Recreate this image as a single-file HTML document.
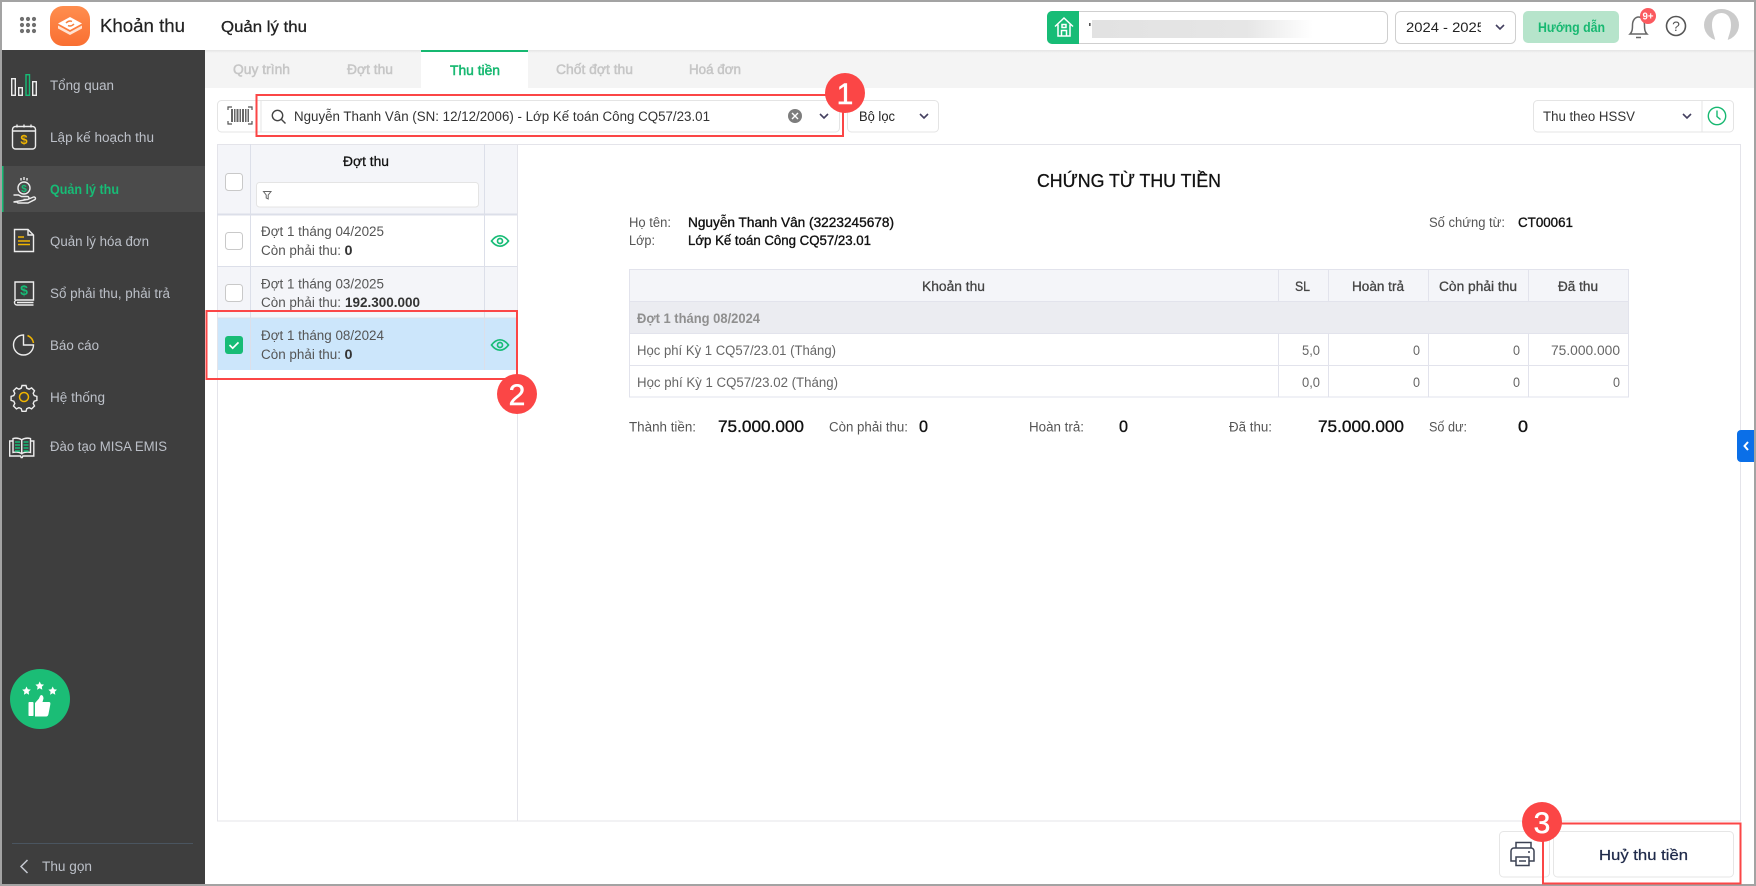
<!DOCTYPE html>
<html lang="vi">
<head>
<meta charset="utf-8">
<title>Quản lý thu</title>
<style>
html,body{margin:0;padding:0;background:#fff;width:1756px;height:886px;overflow:hidden}
svg{display:block}
text{font-family:"Liberation Sans","Noto Sans CJK SC",sans-serif;font-size:13.5px;fill:#444;white-space:pre}
.s{fill:#bcc0c8}
.m{stroke:currentColor;stroke-width:.25}
.t{fill:#c6c6c6;stroke:#c6c6c6;stroke-width:.5;font-size:13.5px}
.d{fill:#111}
.l{fill:#555}
.h{fill:#444;stroke:#444;stroke-width:.3}
.b{fill:#111;stroke:#111;stroke-width:.35}
.n{fill:#666}
.big{font-size:16.5px;fill:#111;stroke:#111;stroke-width:.35}
.badge{font-size:30px;fill:#fff;stroke:#fff;stroke-width:.5;text-anchor:middle}
</style>
</head>
<body>
<svg width="1756" height="886" viewBox="0 0 1756 886" xmlns="http://www.w3.org/2000/svg">
<defs>
<linearGradient id="lg" x1="0" y1="0" x2="0" y2="1"><stop offset="0" stop-color="#ff8e4e"/><stop offset="1" stop-color="#f96f32"/></linearGradient>
<linearGradient id="blur" x1="0" y1="0" x2="1" y2="0"><stop offset="0" stop-color="#e2e2e2"/><stop offset=".7" stop-color="#e6e6e6"/><stop offset="1" stop-color="#fff"/></linearGradient>
<linearGradient id="sh" x1="0" y1="0" x2="0" y2="1"><stop offset="0" stop-color="#e4e4e4"/><stop offset="1" stop-color="#f4f4f4"/></linearGradient>
</defs>

<!-- frame -->
<rect width="1756" height="886" fill="#a3a3a3"/>
<rect x="2" y="2" width="1752" height="882" fill="#fff"/>

<!-- tabs bar -->
<rect x="205" y="50" width="1549" height="38" fill="#f4f4f4"/>
<rect x="205" y="50" width="1549" height="3" fill="url(#sh)"/>
<rect x="421" y="50" width="107" height="38" fill="#fff"/>
<rect x="421" y="50" width="107" height="2" fill="#17b871"/>
<text class="t" x="233" y="74" textLength="57" lengthAdjust="spacingAndGlyphs">Quy trình</text>
<text class="t" x="347" y="74" textLength="46" lengthAdjust="spacingAndGlyphs">Đợt thu</text>
<text x="450" y="75" textLength="50" lengthAdjust="spacingAndGlyphs" style="fill:#17b871;stroke:#17b871;stroke-width:.5">Thu tiền</text>
<text class="t" x="556" y="74" textLength="77" lengthAdjust="spacingAndGlyphs">Chốt đợt thu</text>
<text class="t" x="689" y="74" textLength="52" lengthAdjust="spacingAndGlyphs">Hoá đơn</text>

<!-- header left -->
<g fill="#707070">
<circle cx="22" cy="19" r="2.1"/><circle cx="28" cy="19" r="2.1"/><circle cx="34" cy="19" r="2.1"/>
<circle cx="22" cy="25" r="2.1"/><circle cx="28" cy="25" r="2.1"/><circle cx="34" cy="25" r="2.1"/>
<circle cx="22" cy="31" r="2.1"/><circle cx="28" cy="31" r="2.1"/><circle cx="34" cy="31" r="2.1"/>
</g>
<rect x="50" y="6" width="40" height="40" rx="13" fill="url(#lg)"/>
<path d="M70 17 L82 23.5 L70 30 L58 23.5Z" fill="#fff"/>
<path d="M58 25.5 L70 32 L82 25.5 L82 28.5 L70 35 L58 28.5Z" fill="#ffe3d3"/>
<path d="M66 23 q3-3 6-1.5 M74 24 q-3 3-6 1.5" stroke="#f7803f" stroke-width="1.5" fill="none"/>
<text x="100" y="32" textLength="85" lengthAdjust="spacingAndGlyphs" style="font-size:18.5px;fill:#222;stroke:#222;stroke-width:.2">Khoản thu</text>
<text x="221" y="32" textLength="86" lengthAdjust="spacingAndGlyphs" style="font-size:16px;fill:#222;stroke:#222;stroke-width:.3">Quản lý thu</text>

<!-- header right -->
<rect x="1047.5" y="11.5" width="340" height="32" rx="5" fill="#fff" stroke="#cfcfcf"/>
<path d="M1052 11 H1079 V44 H1052 a5 5 0 0 1-5-5 V16 a5 5 0 0 1 5-5Z" fill="#17bc76"/>
<path d="M1055 26.500 L1064 18 L1073 26.500 M1058 24.500 V36 H1070 V24.500 M1061.500 36 V30.500 H1066.500 V36 M1062 24.500 H1066 V27.500 H1062Z" fill="none" stroke="#fff" stroke-width="1.5"/>
<rect x="1089" y="23" width="1.6" height="3" fill="#555"/>
<rect x="1092" y="20" width="221" height="18" fill="url(#blur)"/>
<rect x="1395.5" y="11.5" width="120" height="32" rx="5" fill="#fff" stroke="#cfcfcf"/>
<svg x="1406" y="15" width="75" height="24" viewBox="0 0 75 24"><text x="0" y="17" textLength="79" lengthAdjust="spacingAndGlyphs" style="fill:#222">2024 - 2025</text></svg>
<path d="M1496 25 l4 4 l4-4" fill="none" stroke="#444060" stroke-width="1.6"/>
<rect x="1523" y="11" width="96" height="32" rx="5" fill="#b6e4cb"/>
<text x="1538" y="32" textLength="67" lengthAdjust="spacingAndGlyphs" style="font-size:13.5px;font-weight:700;fill:#17b871">Hướng dẫn</text>
<path d="M1630 34 c2-2 2.500-4 2.500-9 c0-5 3-8 6-8 c3 0 6 3 6 8 c0 5 .5 7 2.500 9Z M1636 37.500 h5" fill="none" stroke="#666" stroke-width="1.5"/>
<circle cx="1648" cy="16" r="8" fill="#fb5a5f"/>
<text x="1642.500" y="19.500" textLength="11" lengthAdjust="spacingAndGlyphs" style="font-size:10px;font-weight:700;fill:#fff">9+</text>
<circle cx="1676" cy="26" r="9.500" fill="none" stroke="#555" stroke-width="1.600"/>
<text x="1676" y="31" style="font-size:14px;fill:#555;text-anchor:middle">?</text>
<ellipse cx="1721.500" cy="25" rx="17.500" ry="16" fill="#cbcbcb"/>
<path d="M1715.500 42 C1715 36 1712 32 1712 25 C1712 17 1716 13 1721.500 13 C1727 13 1731 17 1731 25 C1731 32 1728 36 1727.500 42Z" fill="#fff"/>

<!-- sidebar -->
<rect x="2" y="50" width="203" height="834" fill="#3e3e3e"/>
<rect x="2" y="166" width="203" height="46" fill="#4b4b4b"/>
<rect x="2" y="166" width="1.500" height="46" fill="#17bc76"/>

<g fill="none" stroke="#ededed" stroke-width="1.400">
<rect x="11.700" y="78.700" width="3.600" height="16.600"/>
<rect x="18.700" y="87.700" width="3.600" height="7.600"/>
<rect x="32.700" y="81.700" width="3.600" height="13.600"/>
<rect x="26" y="74.700" width="3.500" height="20.600" stroke="#17bc76"/>

<rect x="12.500" y="126.500" width="23" height="22.500" rx="3"/>
<path d="M13 131 H35"/>
<path d="M17 124.500 v3 M24 124.500 v3 M31 124.500 v3"/>

<circle cx="24" cy="188" r="6"/>
<path d="M24 177 v3 M21 178 v2.500 M27 178 v2.500"/>
<path d="M13.500 195 h5 l3 1.500 h6 a1.500 1.500 0 0 1 0 3 h-4 m4 0 l6-2.500 a1.500 1.500 0 0 1 1.500 2.500 l-7 3.500 h-10 l-1-1 h-3.500Z"/>

<path d="M14.500 229.500 H28 L33.500 235 V251.500 H14.500Z M28 229.500 V235 H33.500"/>

<path d="M15 300 V282 H33.500 V300 H17 a2.500 2.500 0 0 0 0 5 H33.500 M17 302.500 H33.500"/>

<path d="M33.500 345 A10 10 0 1 1 23.500 335 V345Z"/>

<path d="M22 385.500 h4 l.8 2.700 2.300 1 2.500-1.300 2.900 2.900-1.300 2.500 1 2.300 2.700 .8 v4 l-2.700 .8-1 2.300 1.300 2.500-2.900 2.900-2.500-1.300-2.300 1-.8 2.700 h-4 l-.8-2.700-2.300-1-2.500 1.300-2.900-2.900 1.300-2.500-1-2.300-2.700-.8 v-4 l2.700-.8 1-2.300-1.300-2.500 2.900-2.900 2.500 1.300 2.300-1Z"/>

<path d="M13 441 H9.700 V456 H20.500 L21.200 457.500 H22.200 L22.900 456 H33.800 V441 H30.500"/>
<path d="M13 438.500 C16 437.800 19 438 21.700 439.800 V453.500 C19 452 16 451.700 13 452.500Z"/>
<path d="M30.500 438.500 C27.500 437.800 24.500 438 21.700 439.800 V453.500 C24.500 452 27.500 451.700 30.500 452.500Z"/>
</g>
<g fill="none" stroke="#f0b400" stroke-width="1.500">
<path d="M27.500 335.500 A10 10 0 0 1 33.500 343"/>
<circle cx="24" cy="397" r="4.500"/>
<path d="M18 237 h6 M18 241 h12 M18 244.500 h12"/>
</g>
<text x="24" y="144" style="font-size:13px;font-weight:700;fill:#f0b400;text-anchor:middle">$</text>
<text x="24" y="192" style="font-size:10px;font-weight:700;fill:#17bc76;text-anchor:middle">$</text>
<text x="24" y="295" style="font-size:14px;font-weight:700;fill:#17bc76;text-anchor:middle">$</text>
<g stroke="#17bc76" stroke-width="1.500"><path d="M15 442 h5 M15 445 h5 M15 448 h5 M15 451 h5 M23.500 442 h5 M23.500 445 h5 M23.500 448 h5 M23.500 451 h5"/></g>

<text class="s" x="50" y="90" textLength="64" lengthAdjust="spacingAndGlyphs">Tổng quan</text>
<text class="s" x="50" y="142" textLength="104" lengthAdjust="spacingAndGlyphs">Lập kế hoạch thu</text>
<text x="50" y="194" textLength="69" lengthAdjust="spacingAndGlyphs" style="font-weight:700;fill:#17bc76">Quản lý thu</text>
<text class="s" x="50" y="246" textLength="99" lengthAdjust="spacingAndGlyphs">Quản lý hóa đơn</text>
<text class="s" x="50" y="298" textLength="120" lengthAdjust="spacingAndGlyphs">Sổ phải thu, phải trả</text>
<text class="s" x="50" y="350" textLength="49" lengthAdjust="spacingAndGlyphs">Báo cáo</text>
<text class="s" x="50" y="402" textLength="55" lengthAdjust="spacingAndGlyphs">Hệ thống</text>
<text class="s" x="50" y="451" textLength="117" lengthAdjust="spacingAndGlyphs">Đào tạo MISA EMIS</text>

<circle cx="40" cy="699" r="30" fill="#1bbd76"/>
<g fill="#fff">
<path d="M26.500 686.500 l1.300 2.700 3 .4-2.200 2.100 .5 3-2.600-1.400-2.600 1.400 .5-3-2.200-2.100 3-.4Z"/>
<path d="M39.700 681.500 l1.300 2.700 3 .4-2.200 2.100 .5 3-2.600-1.400-2.600 1.400 .5-3-2.200-2.100 3-.4Z"/>
<path d="M52.700 686.500 l1.300 2.700 3 .4-2.200 2.100 .5 3-2.600-1.400-2.600 1.400 .5-3-2.200-2.100 3-.4Z"/>
<rect x="28.500" y="702" width="5" height="14" rx=".8"/>
<path d="M35 703 l4-4.500 c.5-1.200 1-2.800 2-3.500 c2 0 2.500 2 2.500 3.500 l-1 3.500 h6.500 c1.500 0 1.500 1.500 1.300 2.500 l-1.800 9.500 c-.3 1.500-1 2.500-2.500 2.500 H35Z"/>
</g>

<rect x="12" y="843" width="181" height="1" fill="#4a5560"/>
<path d="M27.500 860 L21 866.500 L27.500 873" fill="none" stroke="#c4c8d0" stroke-width="1.500"/>
<text class="s" x="42" y="871" textLength="50" lengthAdjust="spacingAndGlyphs">Thu gọn</text>

<!-- toolbar -->
<rect x="217.500" y="100.500" width="622" height="31.500" rx="4" fill="#fff" stroke="#e4e4e4"/>
<path d="M261 100 V132" stroke="#e4e4e4"/>
<g stroke="#555" fill="none" stroke-width="1.200"><path d="M228 110 v-3 h4 M248 107 h4 v3 M228 121 v3 h4 M248 124 h4 v-3"/></g>
<g fill="#666"><rect x="231" y="109" width="2" height="13"/><rect x="234" y="109" width="1.500" height="13"/><rect x="236.500" y="109" width="2" height="13"/><rect x="239.500" y="109" width="1.500" height="13"/><rect x="242" y="109" width="2" height="13"/><rect x="245" y="109" width="1.500" height="13"/><rect x="247.500" y="109" width="1.500" height="13"/></g>
<circle cx="277.500" cy="115.500" r="5.200" fill="none" stroke="#444" stroke-width="1.400"/>
<path d="M281.500 119.500 L285.500 123.500" stroke="#444" stroke-width="1.400"/>
<text x="294" y="121" textLength="416" lengthAdjust="spacingAndGlyphs" style="fill:#333">Nguyễn Thanh Vân (SN: 12/12/2006) - Lớp Kế toán Công CQ57/23.01</text>
<circle cx="795" cy="116" r="7" fill="#7d7d7d"/>
<path d="M792 113 l6 6 M798 113 l-6 6" stroke="#fff" stroke-width="1.400"/>
<path d="M820 114 l4 4 l4-4" fill="none" stroke="#444060" stroke-width="1.600"/>
<rect x="847.500" y="100.500" width="91" height="31.500" rx="4" fill="#fff" stroke="#e4e4e4"/>
<text x="859" y="121" textLength="36" lengthAdjust="spacingAndGlyphs" style="fill:#222">Bộ lọc</text>
<path d="M920 114 l4 4 l4-4" fill="none" stroke="#444060" stroke-width="1.600"/>
<rect x="1533.500" y="100.500" width="200" height="31.500" rx="4" fill="#fff" stroke="#e4e4e4"/>
<path d="M1702 100 V132" stroke="#e4e4e4"/>
<text x="1543" y="121" textLength="92" lengthAdjust="spacingAndGlyphs" style="fill:#333">Thu theo HSSV</text>
<path d="M1683 114 l4 4 l4-4" fill="none" stroke="#444060" stroke-width="1.600"/>
<circle cx="1717" cy="116" r="8.700" fill="none" stroke="#17b871" stroke-width="1.400"/>
<path d="M1717 110.500 V116.500 L1720.500 119.500" fill="none" stroke="#17b871" stroke-width="1.400"/>

<!-- main outer panel -->
<rect x="217.500" y="144.500" width="1523" height="676.500" fill="#fff" stroke="#e4e4ea"/>
<path d="M517.500 144 V821" stroke="#e4e4ea"/>

<!-- left list -->
<rect x="218" y="145" width="299" height="69" fill="#f4f5f9"/>
<rect x="218" y="266" width="299" height="52" fill="#f4f5f9"/>
<rect x="218" y="318" width="299" height="52" fill="#cce6fb"/>
<g stroke="#dcdfe9"><path d="M250.500 144 V370 M484.500 144 V370"/><path d="M217 214.500 H517" stroke-width="2"/><path d="M217 266.500 H517 M217 318 H517"/></g>
<text x="366" y="166" textLength="46" lengthAdjust="spacingAndGlyphs" style="fill:#111;stroke:#111;stroke-width:.3;text-anchor:middle">Đợt thu</text>
<rect x="225.500" y="173.500" width="17" height="17" rx="3" fill="#fff" stroke="#c9c9c9"/>
<rect x="256.500" y="182.500" width="222" height="24.500" rx="3" fill="#fff" stroke="#e4e4e4"/>
<path d="M263.500 191.500 h7.500 l-2.800 3.500 v4 l-2 -1 v-3Z" fill="none" stroke="#666" stroke-width="1"/>

<rect x="225.500" y="232.500" width="17" height="17" rx="3" fill="#fff" stroke="#c9c9c9"/>
<text class="n" x="261" y="236" textLength="123" lengthAdjust="spacingAndGlyphs" style="fill:#555">Đợt 1 tháng 04/2025</text>
<text class="n" x="261" y="255" textLength="80" lengthAdjust="spacingAndGlyphs" style="fill:#555">Còn phải thu:</text>
<text x="344.500" y="255" textLength="8" lengthAdjust="spacingAndGlyphs" style="font-weight:700;fill:#333">0</text>
<g fill="none" stroke="#17bc76" stroke-width="1.700"><path d="M491.500 241 c3-4 5.500-5.200 8.500-5.200 c3 0 5.500 1.200 8.500 5.200 c-3 4-5.500 5.200-8.500 5.200 c-3 0-5.500-1.200-8.500-5.200Z"/><circle cx="500" cy="241" r="2.500"/></g>

<rect x="225.500" y="284.500" width="17" height="17" rx="3" fill="#fff" stroke="#c9c9c9"/>
<text x="261" y="288.500" textLength="123" lengthAdjust="spacingAndGlyphs" style="fill:#555">Đợt 1 tháng 03/2025</text>
<text x="261" y="307" textLength="80" lengthAdjust="spacingAndGlyphs" style="fill:#555">Còn phải thu:</text>
<text x="345" y="307" textLength="75" lengthAdjust="spacingAndGlyphs" style="font-weight:700;fill:#333">192.300.000</text>

<rect x="225" y="336" width="18" height="18" rx="3" fill="#17bc76"/>
<path d="M229.500 345 l3.200 3.200 l5.800-5.800" fill="none" stroke="#fff" stroke-width="1.700"/>
<text x="261" y="340" textLength="123" lengthAdjust="spacingAndGlyphs" style="fill:#555">Đợt 1 tháng 08/2024</text>
<text x="261" y="359" textLength="80" lengthAdjust="spacingAndGlyphs" style="fill:#555">Còn phải thu:</text>
<text x="344.500" y="359" textLength="8" lengthAdjust="spacingAndGlyphs" style="font-weight:700;fill:#333">0</text>
<g fill="none" stroke="#17bc76" stroke-width="1.700"><path d="M491.500 348 c3-4 5.500-5.200 8.500-5.200 c3 0 5.500 1.200 8.500 5.200 c-3 4-5.500 5.200-8.500 5.200 c-3 0-5.500-1.200-8.500-5.200Z" transform="translate(0 -3)"/><circle cx="500" cy="345" r="2.500"/></g>

<!-- document -->
<text x="1037" y="187" textLength="184" lengthAdjust="spacingAndGlyphs" style="font-size:18px;fill:#111;stroke:#111;stroke-width:.3">CHỨNG TỪ THU TIỀN</text>
<text class="l" x="629" y="227" textLength="42" lengthAdjust="spacingAndGlyphs">Họ tên:</text>
<text class="b" x="688" y="227" textLength="206" lengthAdjust="spacingAndGlyphs">Nguyễn Thanh Vân (3223245678)</text>
<text class="l" x="629" y="245" textLength="26" lengthAdjust="spacingAndGlyphs">Lớp:</text>
<text class="b" x="688" y="245" textLength="183" lengthAdjust="spacingAndGlyphs">Lớp Kế toán Công CQ57/23.01</text>
<text class="l" x="1429" y="227" textLength="76" lengthAdjust="spacingAndGlyphs">Số chứng từ:</text>
<text class="b" x="1518" y="227" textLength="55" lengthAdjust="spacingAndGlyphs">CT00061</text>

<rect x="629.500" y="269.500" width="999" height="127.500" fill="#fff" stroke="#e2e3ec"/>
<rect x="630" y="270" width="998" height="31" fill="#f4f5f9"/>
<rect x="630" y="302" width="998" height="31" fill="#ebecf1"/>
<g stroke="#e2e3ec"><path d="M629 301.500 H1629 M629 333.500 H1629 M629 365.500 H1629"/>
<path d="M1278.500 269 V301 M1328.500 269 V301 M1428.500 269 V301 M1528.500 269 V301"/>
<path d="M1278.500 333 V397 M1328.500 333 V397 M1428.500 333 V397 M1528.500 333 V397"/></g>
<text class="h" x="922" y="291" textLength="63" lengthAdjust="spacingAndGlyphs">Khoản thu</text>
<text class="h" x="1295" y="291" textLength="15" lengthAdjust="spacingAndGlyphs">SL</text>
<text class="h" x="1352" y="291" textLength="52" lengthAdjust="spacingAndGlyphs">Hoàn trả</text>
<text class="h" x="1439" y="291" textLength="78" lengthAdjust="spacingAndGlyphs">Còn phải thu</text>
<text class="h" x="1558" y="291" textLength="40" lengthAdjust="spacingAndGlyphs">Đã thu</text>
<text x="637" y="323" textLength="123" lengthAdjust="spacingAndGlyphs" style="font-weight:700;fill:#8f8f8f">Đợt 1 tháng 08/2024</text>
<text class="n" x="637" y="355" textLength="199" lengthAdjust="spacingAndGlyphs">Học phí Kỳ 1 CQ57/23.01 (Tháng)</text>
<text class="n" x="637" y="387" textLength="201" lengthAdjust="spacingAndGlyphs">Học phí Kỳ 1 CQ57/23.02 (Tháng)</text>
<text class="n" x="1302" y="355" textLength="18" lengthAdjust="spacingAndGlyphs">5,0</text>
<text class="n" x="1413" y="355" textLength="7" lengthAdjust="spacingAndGlyphs">0</text>
<text class="n" x="1513" y="355" textLength="7" lengthAdjust="spacingAndGlyphs">0</text>
<text class="n" x="1551" y="355" textLength="69" lengthAdjust="spacingAndGlyphs">75.000.000</text>
<text class="n" x="1302" y="387" textLength="18" lengthAdjust="spacingAndGlyphs">0,0</text>
<text class="n" x="1413" y="387" textLength="7" lengthAdjust="spacingAndGlyphs">0</text>
<text class="n" x="1513" y="387" textLength="7" lengthAdjust="spacingAndGlyphs">0</text>
<text class="n" x="1613" y="387" textLength="7" lengthAdjust="spacingAndGlyphs">0</text>

<text class="l" x="629" y="431.500" textLength="67" lengthAdjust="spacingAndGlyphs">Thành tiền:</text>
<text class="big" x="718" y="432" textLength="86" lengthAdjust="spacingAndGlyphs">75.000.000</text>
<text class="l" x="829" y="431.500" textLength="79" lengthAdjust="spacingAndGlyphs">Còn phải thu:</text>
<text class="big" x="919" y="432" textLength="9" lengthAdjust="spacingAndGlyphs">0</text>
<text class="l" x="1029" y="431.500" textLength="55" lengthAdjust="spacingAndGlyphs">Hoàn trả:</text>
<text class="big" x="1119" y="432" textLength="9" lengthAdjust="spacingAndGlyphs">0</text>
<text class="l" x="1229" y="431.500" textLength="43" lengthAdjust="spacingAndGlyphs">Đã thu:</text>
<text class="big" x="1318" y="432" textLength="86" lengthAdjust="spacingAndGlyphs">75.000.000</text>
<text class="l" x="1429" y="431.500" textLength="38" lengthAdjust="spacingAndGlyphs">Số dư:</text>
<text class="big" x="1518" y="432" textLength="10" lengthAdjust="spacingAndGlyphs">0</text>

<!-- blue tab -->
<path d="M1754 430 H1741 a4 4 0 0 0-4 4 V458 a4 4 0 0 0 4 4 H1754Z" fill="#0a6fe8"/>
<path d="M1748 442 l-3.500 4 l3.500 4" fill="none" stroke="#fff" stroke-width="2"/>

<!-- bottom buttons -->
<rect x="1499.500" y="831.500" width="50" height="45.500" rx="4" fill="#fff" stroke="#e6e6e6"/>
<g fill="none" stroke="#3c4254" stroke-width="1.500">
<path d="M1516 848 V842.500 H1531 V848"/>
<path d="M1516 861 H1511 V851 a3 3 0 0 1 3-3 H1531 a3 3 0 0 1 3 3 V861 H1529"/>
<path d="M1516 857 H1529 V865.500 H1516Z"/>
<path d="M1519 861 h7"/>
</g>
<circle cx="1529" cy="852" r="1" fill="#3c4254"/>
<rect x="1553.500" y="831.500" width="180" height="45.500" rx="4" fill="#fff" stroke="#e6e6e6"/>
<text x="1599" y="860" textLength="89" lengthAdjust="spacingAndGlyphs" style="font-size:15px;fill:#1f2a4a;stroke:#1f2a4a;stroke-width:.25">Huỷ thu tiền</text>

<!-- annotations -->
<g fill="none" stroke="#fb4646" stroke-width="2">
<rect x="256.500" y="95" width="586.500" height="41"/>
<rect x="206.500" y="311" width="310.500" height="68"/>
<rect x="1543" y="823.500" width="197.500" height="60"/>
</g>
<g fill="#fb4646"><circle cx="845" cy="93" r="20"/><circle cx="517" cy="394" r="20"/><circle cx="1542" cy="822" r="20"/></g>
<text class="badge" x="845" y="104">1</text>
<text class="badge" x="517" y="405">2</text>
<text class="badge" x="1542" y="833">3</text>
</svg>
</body>
</html>
